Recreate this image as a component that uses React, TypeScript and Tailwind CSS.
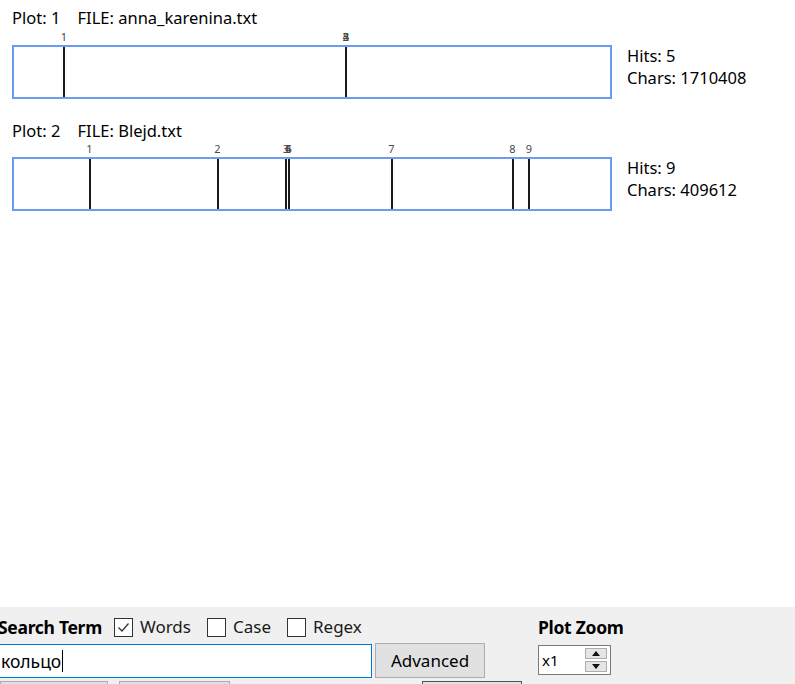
import React from "react";

type Marker = { c: number; label: string };

const FONT = { fontFamily: '"Noto Sans", "Open Sans", sans-serif' };

function PlotBox({ markers }: { markers: Marker[] }) {
  return (
    <div className="relative w-[600px] h-[54px] border-2 border-[#6d9bf1] bg-white shrink-0">
      {markers.map((m, i) => (
        <React.Fragment key={i}>
          <div
            className="absolute top-0 bottom-0 w-[2px] bg-[#1a1a1a]"
            style={{ left: m.c - 1 - 14 }}
          />
          <div
            className="absolute top-[-16px] text-[11px] leading-[12px] text-[#4a4a4a] -translate-x-1/2"
            style={{ left: m.c - 14 }}
          >
            {m.label}
          </div>
        </React.Fragment>
      ))}
    </div>
  );
}

function Plot({
  n,
  file,
  markers,
  hits,
  chars,
  boxGap,
}: {
  n: number;
  file: string;
  markers: Marker[];
  hits: number;
  chars: number;
  boxGap: string;
}) {
  return (
    <div className="flex flex-col">
      <div className="h-[20px] leading-[20px] text-[16.5px] text-black whitespace-pre">
        {`Plot: ${n}    FILE: ${file}`}
      </div>
      <div className={`flex flex-row ${boxGap}`}>
        <PlotBox markers={markers} />
        <div className="ml-[15px] text-[16.5px] leading-[22px] text-black">
          <div>Hits: {hits}</div>
          <div>Chars: {chars}</div>
        </div>
      </div>
    </div>
  );
}

function Checkbox({ checked, label }: { checked?: boolean; label: string }) {
  return (
    <div className="flex flex-row items-center shrink-0">
      <div className="w-[19px] h-[19px] border border-[#333333] bg-white flex items-center justify-center">
        {checked && (
          <svg width="15" height="15" viewBox="0 0 15 15">
            <path d="M2.5 7.5 L6 11 L12.5 3.5" fill="none" stroke="#333" strokeWidth="1.3" />
          </svg>
        )}
      </div>
      <span className="ml-[7px] text-[17px] text-[#1a1a1a]">{label}</span>
    </div>
  );
}

export default function App() {
  const plot1: Marker[] = [
    { c: 64, label: "1" },
    { c: 346, label: "2" },
    { c: 346, label: "3" },
    { c: 346, label: "4" },
    { c: 346, label: "5" },
  ];
  const plot2: Marker[] = [
    { c: 89.5, label: "1" },
    { c: 217.5, label: "2" },
    { c: 286, label: "3" },
    { c: 288.5, label: "4" },
    { c: 288.5, label: "5" },
    { c: 288.5, label: "6" },
    { c: 391.5, label: "7" },
    { c: 512.5, label: "8" },
    { c: 529, label: "9" },
  ];
  return (
    <div className="w-[795px] h-[684px] bg-white flex flex-col overflow-hidden" style={FONT}>
      <div className="flex-1 flex flex-col pt-[8px] pl-[12px]">
        <Plot n={1} file="anna_karenina.txt" markers={plot1} hits={5} chars={1710408} boxGap="mt-[17px]" />
        <div className="mt-[22px]">
          <Plot n={2} file="Blejd.txt" markers={plot2} hits={9} chars={409612} boxGap="mt-[16px]" />
        </div>
      </div>
      <div className="h-[77px] bg-[#f0f0f0] flex flex-row shrink-0">
        <div className="flex flex-col w-[487px] shrink-0 ml-[-2px] pt-[10px]">
          <div className="flex flex-row items-center h-[20px]">
            <span className="text-[17.5px] font-bold text-black tracking-[-0.3px] shrink-0">Search Term</span>
            <div className="ml-[12px]">
              <Checkbox checked label="Words" />
            </div>
            <div className="ml-[16px]">
              <Checkbox label="Case" />
            </div>
            <div className="ml-[16px]">
              <Checkbox label="Regex" />
            </div>
          </div>
          <div className="flex flex-row mt-[6px] h-[35px]">
            <div className="w-[374px] h-[34px] shrink-0 bg-white border border-[#0078d7] flex items-center pl-[2px] mt-[1px]">
              <span className="text-[17.5px] text-black">кольцо</span>
              <span className="w-[1px] h-[22px] bg-black ml-[1px]" />
            </div>
            <div className="ml-[3px] w-[110px] h-[35px] shrink-0 bg-[#e1e1e1] border border-[#adadad] flex items-center justify-center text-[17px] text-black">
              Advanced
            </div>
          </div>
          <div className="flex flex-row mt-[3px] h-[10px]">
            <div className="ml-[2px] w-[108px] h-[10px] shrink-0 bg-[#e1e1e1] border border-[#adadad]" />
            <div className="ml-[11px] w-[111px] h-[10px] shrink-0 bg-[#e1e1e1] border border-[#adadad]" />
            <div className="ml-[192px] w-[100px] h-[10px] shrink-0 bg-[#e1e1e1] border border-[#555555]" />
          </div>
        </div>
        <div className="flex flex-col ml-[53px] pt-[10px] shrink-0">
          <div className="h-[20px] flex items-center text-[17.5px] font-bold text-black tracking-[-0.3px]">
            Plot Zoom
          </div>
          <div className="mt-[8px] w-[73px] h-[30px] bg-white border border-[#7a7a7a] flex flex-row items-center">
            <span className="ml-[3px] text-[15px] text-black flex-1">x1</span>
            <div className="flex flex-col gap-[2px] mr-[3px]">
              <div className="w-[22px] h-[11px] bg-[#e5e5e5] border border-[#adadad] flex items-center justify-center">
                <svg width="8" height="5" viewBox="0 0 8 5"><path d="M0 5 L4 0 L8 5 Z" fill="#111" /></svg>
              </div>
              <div className="w-[22px] h-[11px] bg-[#e5e5e5] border border-[#adadad] flex items-center justify-center">
                <svg width="8" height="5" viewBox="0 0 8 5"><path d="M0 0 L4 5 L8 0 Z" fill="#111" /></svg>
              </div>
            </div>
          </div>
        </div>
      </div>
    </div>
  );
}
